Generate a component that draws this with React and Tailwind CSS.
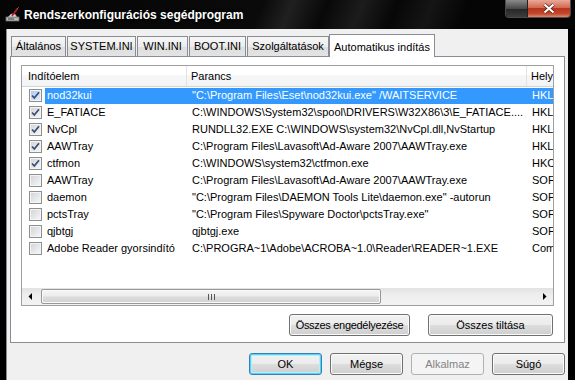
const rows = [
  { name: "nod32kui", cmd: '"C:\\Program Files\\Eset\\nod32kui.exe" /WAITSERVICE', loc: "HKLM", checked: true },
  { name: "E_FATIACE", cmd: "C:\\WINDOWS\\System32\\spool\\DRIVERS\\W32X86\\3\\E_FATIACE....", loc: "HKLM", checked: true },
  { name: "NvCpl", cmd: "RUNDLL32.EXE C:\\WINDOWS\\system32\\NvCpl.dll,NvStartup", loc: "HKLM", checked: true },
  { name: "AAWTray", cmd: "C:\\Program Files\\Lavasoft\\Ad-Aware 2007\\AAWTray.exe", loc: "HKLM", checked: true },
  { name: "ctfmon", cmd: "C:\\WINDOWS\\system32\\ctfmon.exe", loc: "HKCU", checked: true },
  { name: "AAWTray", cmd: "C:\\Program Files\\Lavasoft\\Ad-Aware 2007\\AAWTray.exe", loc: "SOFTWARE", checked: false },
  { name: "daemon", cmd: '"C:\\Program Files\\DAEMON Tools Lite\\daemon.exe" -autorun', loc: "SOFTWARE", checked: false },
  { name: "pctsTray", cmd: '"C:\\Program Files\\Spyware Doctor\\pctsTray.exe"', loc: "SOFTWARE", checked: false },
  { name: "qjbtgj", cmd: "qjbtgj.exe", loc: "SOFTWARE", checked: false },
  { name: "Adobe Reader gyorsindító", cmd: "C:\\PROGRA~1\\Adobe\\ACROBA~1.0\\Reader\\READER~1.EXE", loc: "Common Startup", checked: false },
];

const tabs = [
  { label: "Általános", w: "w-[55px]" },
  { label: "SYSTEM.INI", w: "w-[69px]" },
  { label: "WIN.INI", w: "w-[51px]" },
  { label: "BOOT.INI", w: "w-[57px]" },
  { label: "Szolgáltatások", w: "w-[82px]" },
];

function Checkbox({ checked, active }) {
  return (
    <div
      className={`w-[13px] h-[13px] border border-[#8e8f8f] flex items-center justify-center shadow-[inset_0_0_0_1px_#f4f4f4] ${
        active
          ? "bg-[linear-gradient(135deg,#a9c9ef,#e4effb)]"
          : "bg-[linear-gradient(135deg,#d0d2d6,#f8f8f8)]"
      }`}
    >
      {checked && (
        <svg width="11" height="11" viewBox="0 0 11 11">
          <path d="M2 5.5 L4.3 8 L9 2.2" fill="none" stroke="#3a4c70" strokeWidth="1.7" />
        </svg>
      )}
    </div>
  );
}

function Button({ children, className = "", def, disabled }) {
  return (
    <div
      className={`h-[22px] rounded-[3px] border flex items-center justify-center shrink-0 ${
        disabled
          ? "border-[#adb2b5] bg-[#f4f4f4] text-[#838383]"
          : def
            ? "border-[#3c7fb1] bg-[linear-gradient(#f2f2f2_0%,#ebebeb_50%,#dddddd_50%,#cfcfcf_100%)] shadow-[inset_0_0_0_1px_#48d6fb,inset_0_0_0_2px_#bfeafa]"
            : "border-[#707070] bg-[linear-gradient(#f2f2f2_0%,#ebebeb_50%,#dddddd_50%,#cfcfcf_100%)] shadow-[inset_0_0_0_1px_#fbfbfb]"
      } ${className}`}
    >
      {children}
    </div>
  );
}

export default function App() {
  return (
    <div
      className="w-[575px] h-[380px] overflow-hidden bg-black flex flex-col text-[11px] text-black"
      style={{ fontFamily: '"Liberation Sans", Arial, sans-serif' }}
    >
      {/* Title bar */}
      <div className="h-[29px] flex items-start bg-[linear-gradient(112deg,#050505_0%,#0a0a0a_45%,#202020_50%,#080808_56%,#1c1c1c_62%,#070707_68%,#151515_74%,#050505_80%,#050505_100%)]">
        <div className="flex items-center h-[29px] pl-[5px] gap-[3px]">
          <svg width="16" height="16" viewBox="0 0 16 16">
            <rect x="1" y="10" width="13" height="4" fill="#b8b8b8" stroke="#6a6a6a" strokeWidth="0.8" />
            <rect x="3" y="11.5" width="6" height="1" fill="#444" />
            <path d="M3 10 L6 7 L10 7 L12 10 Z" fill="#d8d8d8" stroke="#777" strokeWidth="0.6" />
            <path d="M7 9 L12.5 1.5" stroke="#c0182a" strokeWidth="1.6" />
            <path d="M12.5 1.5 L13.5 0.6" stroke="#ff8a8a" strokeWidth="1" />
          </svg>
          <span className="text-white font-bold text-[12px] [text-shadow:0_0_3px_#000]">
            Rendszerkonfigurációs segédprogram
          </span>
        </div>
        <div className="ml-auto mr-[4px] flex h-[18px] rounded-b-[4px] border border-t-0 border-[#4a4a4a] overflow-hidden">
          <div className="w-[22px] bg-[linear-gradient(#8a8a8a,#4a4a4a_50%,#262626_51%,#3d3d3d)] border-r border-[#222]" />
          <div className="w-[42px] flex items-center justify-center bg-[linear-gradient(#e9a899,#d26a52_45%,#b8341c_50%,#c2482e_80%,#e08a6a)]">
            <svg width="14" height="11" viewBox="0 0 14 11">
              <path d="M2.5 1.5 L11.5 9.5 M11.5 1.5 L2.5 9.5" stroke="#5a1a10" strokeWidth="3.6" />
              <path d="M2.5 1.5 L11.5 9.5 M11.5 1.5 L2.5 9.5" stroke="#ffffff" strokeWidth="2.2" />
            </svg>
          </div>
        </div>
      </div>

      {/* Client area */}
      <div className="flex-1 ml-[6px] mr-[7px] bg-[#f0f0f0] border-l border-[#8c8c8c] flex flex-col">
        <div className="pt-[4px] pl-[3px]">
          {/* Tabs */}
          <div className="flex items-end h-[23px] pl-[1px] gap-[1px]">
            {tabs.map((t) => (
              <div
                key={t.label}
                className={`${t.w} h-[20px] shrink-0 border border-b-0 border-[#898c95] bg-[linear-gradient(#f7f7f7,#ececec_50%,#dedede_51%,#e3e3e3)] flex items-center justify-center`}
              >
                {t.label}
              </div>
            ))}
            <div className="w-[106px] h-[23px] shrink-0 -ml-[1px] -mb-[1px] border border-b-0 border-[#898c95] bg-white flex items-start justify-center pt-[4px] relative z-10">
              Automatikus indítás
            </div>
          </div>

          {/* Panel */}
          <div className="w-[555px] h-[287px] border border-[#898c95] bg-white pl-[10px] pt-[8px]">
            {/* List view */}
            <div className="w-[533px] h-[241px] border border-[#a0a0a0] flex flex-col overflow-hidden">
              <div className="h-[21px] flex shrink-0 border-b border-[#d5d5d5] bg-[linear-gradient(#ffffff_0%,#ffffff_45%,#f6f7f8_46%,#f2f3f5_100%)]">
                <div className="w-[165px] shrink-0 pl-[6px] flex items-center border-r border-[#e3e3e3]">Indítóelem</div>
                <div className="w-[340px] shrink-0 pl-[4px] flex items-center border-r border-[#e3e3e3]">Parancs</div>
                <div className="flex-1 pl-[4px] flex items-center whitespace-nowrap overflow-hidden">Hely</div>
              </div>
              <div className="flex-1 flex flex-col">
                {rows.map((r, i) => (
                  <div key={i} className="h-[17px] flex items-center whitespace-nowrap">
                    <div className="w-[23px] shrink-0 pl-[7px] flex items-center">
                      <Checkbox checked={r.checked} active={i === 0} />
                    </div>
                    <div className={`flex-1 h-[16px] flex items-center overflow-hidden ${i === 0 ? "bg-[#3399ff] text-white" : ""}`}>
                      <div className="w-[142px] shrink-0 pl-[2px] overflow-hidden">{r.name}</div>
                      <div className="w-[340px] shrink-0 pl-[5px] overflow-hidden">{r.cmd}</div>
                      <div className="shrink-0 pl-[5px]">{r.loc}</div>
                    </div>
                  </div>
                ))}
              </div>
              {/* Horizontal scrollbar */}
              <div className="h-[17px] shrink-0 flex bg-[linear-gradient(#e2e2e2,#eeeeee_40%,#f3f3f3)]">
                <div className="w-[17px] flex items-center justify-center">
                  <svg width="5" height="7" viewBox="0 0 5 7">
                    <path d="M4 0 L0.5 3.5 L4 7 Z" fill="#000" />
                  </svg>
                </div>
                <div className="w-[340px] ml-[2px] my-[1px] rounded-[2px] border border-[#979797] bg-[linear-gradient(#f5f5f5,#ececec_45%,#dcdcdc_55%,#d2d2d2)] shadow-[inset_0_0_0_1px_#fafafa] flex items-center justify-center">
                  <svg width="7" height="6" viewBox="0 0 7 6">
                    <path d="M0.5 0 V6 M3.5 0 V6 M6.5 0 V6" stroke="#555" strokeWidth="1" />
                  </svg>
                </div>
                <div className="flex-1" />
                <div className="w-[17px] flex items-center justify-center">
                  <svg width="5" height="7" viewBox="0 0 5 7">
                    <path d="M1 0 L4.5 3.5 L1 7 Z" fill="#000" />
                  </svg>
                </div>
              </div>
            </div>
            <div className="w-[533px] flex justify-end pr-[1px] mt-[8px] gap-[18px]">
              <Button className="w-[121px] tracking-[-0.3px]">Összes engedélyezése</Button>
              <Button className="w-[125px]">Összes tiltása</Button>
            </div>
          </div>
        </div>

        {/* Bottom buttons */}
        <div className="flex justify-end gap-[8px] mt-[10px] pr-[3px]">
          <Button className="w-[73px]" def>OK</Button>
          <Button className="w-[73px]">Mégse</Button>
          <Button className="w-[73px]" disabled>Alkalmaz</Button>
          <Button className="w-[73px]">Súgó</Button>
        </div>
      </div>
    </div>
  );
}
